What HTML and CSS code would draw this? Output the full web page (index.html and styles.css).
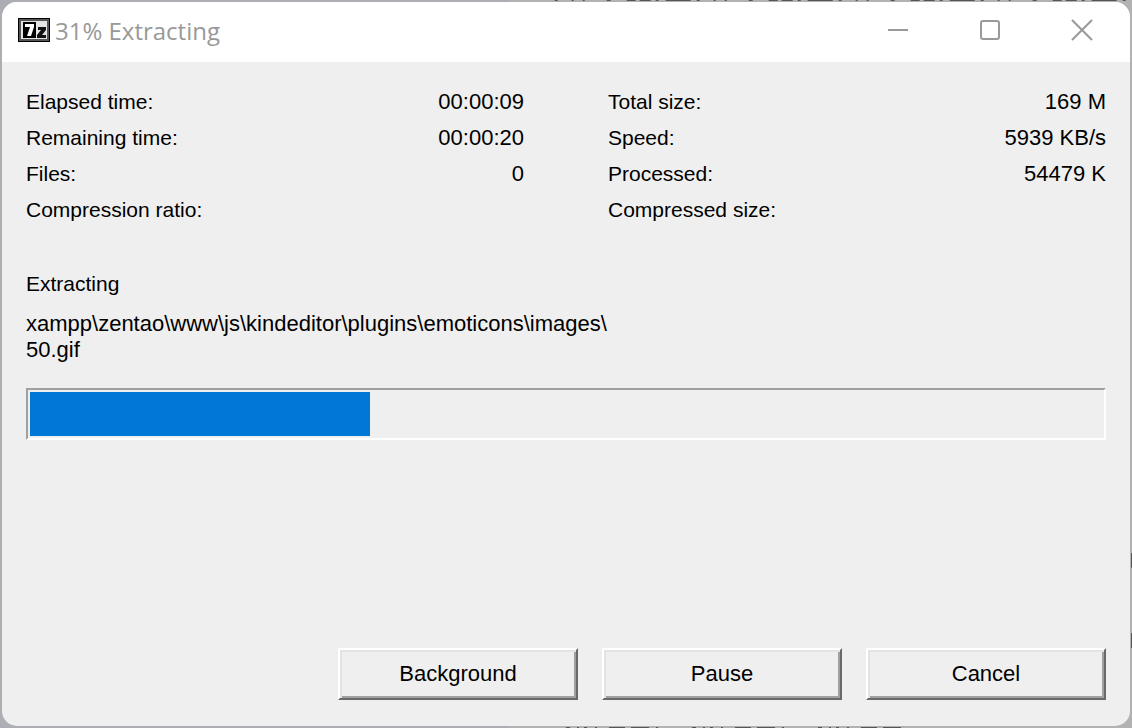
FILE: index.html
```html
<!DOCTYPE html>
<html lang="en">
<head>
    <meta charset="UTF-8">
    <meta name="viewport" content="width=device-width, initial-scale=1.0">
    <title>31% Extracting</title>
    <link rel="stylesheet" href="styles.css">
</head>
<body>
    <svg class="backdrop-marks" aria-hidden="true">
        <line x1="49%" y1="0" x2="100%" y2="0" stroke-dasharray="3 14 2 9 2 22 4 16 9 4 11 5 3 7 25 6"/>
        <line x1="50%" y1="100%" x2="80%" y2="100%" stroke-dasharray="4 7 2 5 3 8 2 12 16 6 18 7 2 34"/>
        <line x1="100%" y1="76%" x2="100%" y2="78%"/>
        <line x1="100%" y1="87%" x2="100%" y2="89%"/>
    </svg>
    <div class="window">
        <header class="title-bar">
            <svg class="app-icon" viewBox="0 0 32 24" aria-hidden="true">
                <rect width="32" height="24" fill="#000"/>
                <rect x="1" y="1" width="30" height="22" fill="#555"/>
                <rect x="3" y="3" width="26" height="18" fill="#e4e4e4"/>
                <rect x="5" y="4" width="13" height="16" fill="#000"/>
                <path d="M7 6H16V9L13 18H9L12 9H7Z" fill="#fff"/>
                <path d="M20 9H28V12L24 17H28V20H19V17L23 12H20Z" fill="#111"/>
            </svg>
            <h1>31% Extracting</h1>
            <div class="window-controls">
                <button aria-label="Minimize"><svg viewBox="0 0 20 20"><path d="M0 10H20"/></svg></button>
                <button aria-label="Maximize"><svg viewBox="0 0 20 20"><rect x="1" y="1" width="18" height="18" rx="2"/></svg></button>
                <button aria-label="Close"><svg viewBox="0 0 20 20"><path d="M0 0L20 20M20 0L0 20"/></svg></button>
            </div>
        </header>
        <main>
            <div class="stats">
                <table>
                    <tr><th scope="row">Elapsed time:</th><td>00:00:09</td></tr>
                    <tr><th scope="row">Remaining time:</th><td>00:00:20</td></tr>
                    <tr><th scope="row">Files:</th><td>0</td></tr>
                    <tr><th scope="row">Compression ratio:</th><td></td></tr>
                </table>
                <table>
                    <tr><th scope="row">Total size:</th><td>169 M</td></tr>
                    <tr><th scope="row">Speed:</th><td>5939 KB/s</td></tr>
                    <tr><th scope="row">Processed:</th><td>54479 K</td></tr>
                    <tr><th scope="row">Compressed size:</th><td></td></tr>
                </table>
            </div>
            <label class="status" for="progress">Extracting</label>
            <p class="path">xampp\zentao\www\js\kindeditor\plugins\emoticons\images\<br>50.gif</p>
            <progress id="progress" value="31.7" max="100"></progress>
            <div class="actions">
                <button>Background</button>
                <button>Pause</button>
                <button>Cancel</button>
            </div>
        </main>
    </div>
</body>
</html>
```
FILE: styles.css
```css
* {
    box-sizing: border-box;
}
body {
    margin: 0;
    padding: 2px;
    height: 100vh;
    background: linear-gradient(90deg, #adadb4 45%, #b2b2b2 45%);
    font-family: "Liberation Sans", Arial, sans-serif;
    font-size: 22px;
    color: #000;
}
.backdrop-marks {
    position: absolute;
    top: 0;
    left: 0;
    width: 100%;
    height: 100%;
    stroke: #555;
    stroke-width: 2;
}
.window {
    position: relative;
    display: flex;
    flex-direction: column;
    height: 100%;
    background-color: #efefef;
    border-radius: 15px;
    overflow: hidden;
}
.title-bar {
    display: flex;
    align-items: center;
    height: 60px;
    padding: 0 2px 4px 16px;
    background-color: #fff;
}
.app-icon {
    width: 32px;
    height: 24px;
}
h1 {
    flex: 1;
    margin: 0 0 0 5px;
    font-family: "Open Sans", "Noto Sans", sans-serif;
    font-size: 24px;
    font-weight: normal;
    color: #999;
}
.window-controls {
    display: flex;
}
.window-controls button {
    width: 92px;
    height: 56px;
    padding: 0;
    border: none;
    background: none;
}
.window-controls svg {
    display: block;
    width: 20px;
    height: 20px;
    margin: 0 auto;
    overflow: visible;
    fill: none;
    stroke: #999;
    stroke-width: 2;
}
main {
    flex: 1;
    display: flex;
    flex-direction: column;
    padding: 22px 24px 26px;
}
.stats {
    display: grid;
    grid-template-columns: 1fr 1fr;
    gap: 84px;
}
table {
    width: 100%;
    border-collapse: collapse;
}
tr {
    height: 36px;
}
th,
td {
    padding: 0;
    font-weight: normal;
    line-height: 36px;
    text-align: left;
}
th,
.status {
    font-size: 21px;
}
td {
    text-align: right;
}
.status {
    margin-top: 38px;
    line-height: 36px;
}
.path {
    margin: 9px 0 25px;
    line-height: 26px;
}
progress {
    appearance: none;
    width: 100%;
    height: 52px;
    padding: 2px;
    border: 2px solid;
    border-color: #a0a0a0 #fff #fff #a0a0a0;
    background-color: #efefef;
}
progress::-webkit-progress-bar {
    background-color: #efefef;
}
progress::-webkit-progress-value {
    background-color: #0078d7;
}
.actions {
    display: flex;
    justify-content: flex-end;
    gap: 24px;
    margin-top: auto;
}
.actions button {
    width: 240px;
    height: 52px;
    padding: 0;
    border: 2px solid;
    border-color: #fff #696969 #696969 #fff;
    background-color: #efefef;
    box-shadow: inset 2px 2px #e3e3e3, inset -2px -2px #a0a0a0;
    font: inherit;
    color: inherit;
}
```
